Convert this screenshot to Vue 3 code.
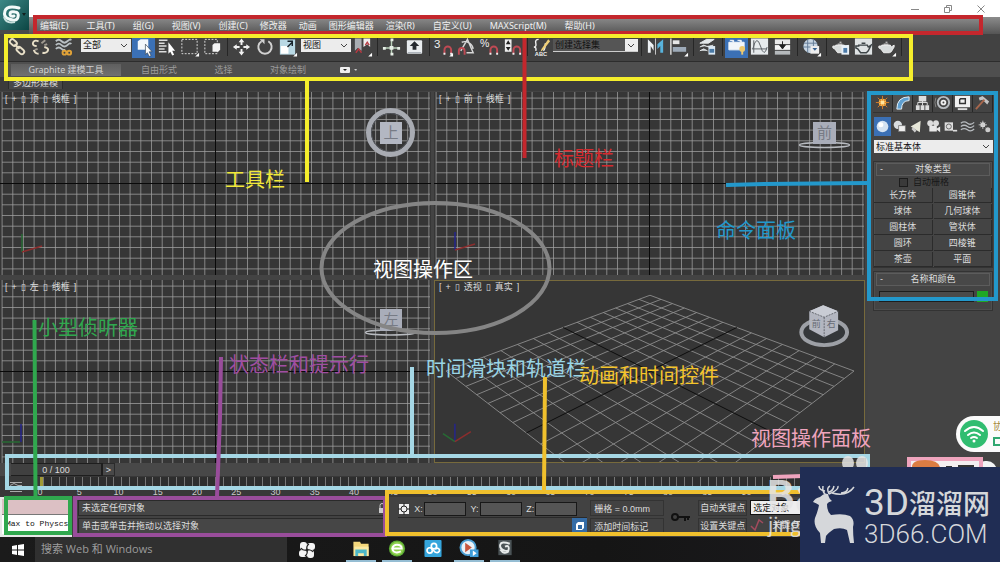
<script setup>
const menus = [
  { t: '编辑(E)', k: true }, { t: '工具(T)', k: true }, { t: '组(G)', k: true },
  { t: '视图(V)', k: true }, { t: '创建(C)', k: false }, { t: '修改器', k: false },
  { t: '动画', k: false }, { t: '图形编辑器', k: false }, { t: '渲染(R)', k: true },
  { t: '自定义(U)', k: true }, { t: 'MAXScript(M)', k: true }, { t: '帮助(H)', k: false }
]

const magnet = '<path d="M12 17v-4a3.500 3.500 0 0 1 7 0v4" fill="none" stroke="#c04a54" stroke-width="2"/><path d="M11 17h2M18 17h2" stroke="#eee" stroke-width="2"/>'
const teapot = '<path d="M6 8h9l1 2 3-2v2l-3 5-2 1H8l-3-4-2-1V9h3zM8 7h5M10 5h2" fill="#d8dcdc" stroke="#eee"/>'
const corner = '<path d="M21 16v4h-4z" fill="#fff"/>'

const icons = {
  link: '<g fill="none" stroke="#e8dfc8" stroke-width="2"><rect x="3" y="3" width="8" height="5" rx="2.500" transform="rotate(42 7 5)"/><rect x="10" y="11" width="9" height="5" rx="2.500" transform="rotate(42 14 13)"/><path d="M8 7l5 5"/></g>',
  unlink: '<g fill="none" stroke="#e8dfc8" stroke-width="2"><path d="M9 4q-5-2-6 2 0 3 4 3M4 13q1 4 5 4M13 16q5 1 6-3 0-2-4-3"/><path d="M12 6l4-3M15 8l3-1M8 12l-3 1" stroke="#a09a90"/></g>',
  bind: '<g fill="none" stroke="#b9c0c4" stroke-width="2"><path d="M3 4q3-3 6 0t6 0 4-1M3 8q3-3 6 0t6 0 4-1M3 12q3-3 6 0t3 0"/></g><g fill="none" stroke="#e0a238" stroke-width="2"><circle cx="12" cy="16" r="2"/><circle cx="17" cy="16" r="2"/></g>',
  pick: '<path d="M5 4l3-2h8v9l-3 2H5z" fill="#f3f7fb"/><path d="M13 7v11l2-2 2 4 2-1-2-4h3z" fill="#fff" stroke="#345" stroke-width=".7"/>',
  byname: '<path d="M3 3h9M3 6h6M3 9h8M3 12h6M3 15h8" stroke="#ddd" stroke-width="1.500"/><path d="M13 5v12l2-2 2 4 2-1-2-4h3z" fill="#fff"/>',
  rect: '<rect x="3" y="2" width="16" height="15" fill="none" stroke="#ddd" stroke-dasharray="2 1.500"/>' + corner,
  window: '<rect x="3" y="2" width="13" height="15" fill="none" stroke="#ddd" stroke-dasharray="2 1.500"/><path d="M11 8l2-2h6v7l-2 2h-6z" fill="#f4f4f4"/>',
  move: '<path d="M11 4v4M11 12v4M5 10h4M13 10h4" stroke="#f2f2f2" stroke-width="2"/><path d="M11 1l3 4H8zM11 19l3-4H8zM2 10l4-3v6zM20 10l-4-3v6z" fill="#f2f2f2"/>',
  rotate: '<path d="M8 4a7 7 0 1 0 7 0" fill="none" stroke="#d2d2d2" stroke-width="2"/><path d="M6 2h5v5z" fill="#d2d2d2"/>',
  scale: '<rect x="3" y="2" width="16" height="16" fill="#b8d8e4"/><rect x="4" y="9" width="8" height="8" fill="#fff"/><path d="M11 10l5-5M16 9V4h-5" fill="none" stroke="#17232b" stroke-width="1.500"/>' + corner,
  pivot: '<path d="M3 1h7v13l-4-3-3 3z" fill="#a9adb2"/><path d="M12 1h7v9l-3-3-4 3z" fill="#eee"/><path d="M4 16l3-4 3 4M14 8l2-3 2 3" stroke="#b83a42" stroke-width="1.500" fill="none"/>' + corner,
  manip: '<path d="M11 3v15M4 11h14" stroke="#b9d0b9" stroke-width="1.500"/><path d="M9 9h4v4H9zM10 1h3v3h-3zM2 10h3v3H2zM17 10h3v3h-3zM10 16h3v3h-3z" fill="#e7efe7"/>',
  keyb: '<rect x="3" y="3" width="16" height="14" rx="1" fill="#e9edf0"/><path d="M11 4l5 5h-3v4H9V9H6z" fill="#252a30"/><path d="M4 16h14" stroke="#98a0a8"/>',
  snap3: '<text x="1" y="11" font-size="12" font-family="Liberation Sans" fill="#f0f0f0">3</text>' + magnet + corner,
  snapang: '<path d="M5 14L12 2l6 14h-7M6 5a9 9 0 0 1 12 7" fill="none" stroke="#d8d8d8" stroke-width="1.500"/><path d="M3 18v-4a3 3 0 0 1 6 0v4" fill="none" stroke="#c04a54" stroke-width="2"/>',
  snappct: '<text x="1" y="10" font-size="11" font-family="Liberation Sans" fill="#f0f0f0">%</text>' + magnet,
  snapspin: '<rect x="3" y="2" width="7" height="13" fill="#eee"/><path d="M4 7l2.500-4L9 7zM4 10h5l-2.500 4z" fill="#222"/>' + magnet,
  named: '<path d="M8 2q-4 0-3 4t-2 4q3 0 2 4M15 6q0 6-2 8" fill="none" stroke="#eee" stroke-width="1.500"/><path d="M18 2l-7 10-1 3 3-2 7-9z" fill="#f0cf77"/><text x="4" y="19" font-size="6" font-weight="700" font-family="Liberation Sans" fill="#eee">ABC</text>',
  mirror: '<path d="M3 2v14h3V9l3 5V8z" fill="#eef2f5"/><path d="M19 2v14h-3V9l-3 3V7z" fill="#58b3dc"/><path d="M11 1v17" stroke="#ccc"/>',
  align: '<path d="M3 1v17" stroke="#ddd" stroke-width="1.500"/><path d="M5 3h7v4H5z" fill="#e6e6e6"/><path d="M5 10h14v5H5z" fill="#9daab8"/>' + corner,
  layers: '<path d="M3 6l7-4h8l-6 4zM3 10l4-2 5 2 5-2M3 14l4-2 4 2" fill="#e4e8ea" stroke="#e4e8ea"/><rect x="12" y="9" width="7" height="9" fill="#dceaf5"/><path d="M13 12h5v4h-5z" fill="#4a7aa6"/>',
  ribbon: '<path d="M3 5h16v8H3zM4 3h4v2M12 3h4v2" fill="#f2f6fa" stroke="#f2f6fa"/><circle cx="17" cy="12" r="3" fill="#edc86d"/><path d="M17 14v4" stroke="#edc86d" stroke-width="2"/>',
  curve: '<rect x="2" y="1" width="18" height="17" fill="#e6eaec"/><path d="M5 3v13M3 12h16M4 12q4-16 8-3t7 1" fill="none" stroke="#5a6065"/>',
  schematic: '<rect x="3" y="2" width="16" height="5" fill="#e9e9e9"/><rect x="3" y="8" width="16" height="5" fill="#f4f4f4"/><rect x="3" y="14" width="16" height="4" fill="#b5b9bc"/><path d="M11 4v5M8 8l3 4 3-4z" fill="#222" stroke="#222"/>',
  material: '<circle cx="10" cy="9" r="7.500" fill="#c7d5e2"/><path d="M3 6h14M2 10h16M7 2v14M13 2v14" stroke="#647c96"/><rect x="10" y="9" width="9" height="8" fill="#eee"/><path d="M12 11h5l-2.500 3z" fill="#345f8f"/>' + corner,
  rsetup: teapot + '<rect x="12" y="8" width="8" height="10" fill="#e9f1f8"/><path d="M14 11h4v5h-4z" fill="#4c7ba9"/>',
  rframe: '<rect x="2" y="1" width="18" height="17" fill="#dfe3e4"/><path d="M6 8h9l1 2 3-2-3 6-2 2H8l-3-4-2-1V9h3zM9 6h4" fill="none" stroke="#3d4447" stroke-width="1.500"/>',
  render: teapot + corner
}

const groups = {
  a: ['link', 'unlink', 'bind'],
  b: ['pick', 'byname', 'rect', 'window'],
  c: ['move', 'rotate', 'scale'],
  e: [['manip', 'keyb'], ['snap3', 'snapang', 'snappct', 'snapspin'], ['named']],
  f: [['mirror', 'align'], ['layers'], ['ribbon', 'curve', 'schematic'], ['material'], ['rsetup', 'rframe', 'render']]
}

const panelTabs = [
  '<circle cx="9" cy="9" r="4" fill="#f7b54a"/><path d="M9 2v14M2 9h14M4 4l10 10M14 4L4 14" stroke="#d67c28"/><circle cx="9" cy="9" r="2" fill="#ffe5a0"/>',
  '<path d="M3 16Q3 3 16 3v4Q8 7 8 16z" fill="#5f9fd0" stroke="#e8f1f8"/>',
  '<path d="M5 2h8v6H5zM2 12h4v5H2zM7 12h4v5H7zM12 12h4v5h-4z" fill="#ddd"/><path d="M9 7v5M4 12V9h10v3" fill="none" stroke="#ddd"/>',
  '<circle cx="10" cy="9" r="6" fill="none" stroke="#b8bcc0" stroke-width="2"/><circle cx="10" cy="9" r="3" fill="#eee"/><circle cx="10" cy="9" r="1" fill="#444"/><path d="M2 4q-2 5 0 10" stroke="#888" fill="none"/>',
  '<rect x="1" y="2" width="16" height="12" fill="#f0f0f0"/><path d="M7 5h5v5H6V6z" fill="none" stroke="#333" stroke-width="1.500"/><path d="M4 16h10" stroke="#ddd" stroke-width="2"/>',
  '<path d="M5 4l4-2 7 6-2 3-5-5-3 1z" fill="#c4c4c4"/><path d="M11 6L2 16" stroke="#a8674d" stroke-width="2"/>'
]
const kinds = [
  '<circle cx="9" cy="9" r="7" fill="#d4e2f1"/><circle cx="7" cy="7" r="3" fill="#fff"/>',
  '<circle cx="7" cy="7" r="5" fill="#d9dde0"/><rect x="8" y="8" width="8" height="7" fill="#eee" stroke="#777"/>',
  '<path d="M2 9l12-7-1 14z" fill="#e6e6d8"/><path d="M4 11l4 4" stroke="#ccc" stroke-width="3"/>',
  '<circle cx="5" cy="5" r="3.500" fill="#ddd"/><circle cx="12" cy="5" r="3.500" fill="#ddd"/><path d="M4 8h9v7H4zM12 12l5-3v7z" fill="#e8e8e8"/>',
  '<rect x="2" y="4" width="10" height="10" fill="#ddd"/><circle cx="7" cy="9" r="3" fill="none" stroke="#555"/><path d="M12 14h5" stroke="#ddd" stroke-width="2"/>',
  '<path d="M1 5q4-3 8 0t8-1M1 9q4-3 8 0t8-1M1 13q4-3 8 0t8-1" fill="none" stroke="#b8bcc0" stroke-width="1.500"/>',
  '<circle cx="7" cy="7" r="3" fill="#ddd"/><circle cx="13" cy="13" r="3" fill="#ccc"/><path d="M7 2v10M2 7h10M4 4l6 6M10 4l-6 6" stroke="#ccc"/>'
]
const primitives = ['长方体', '圆锥体', '球体', '几何球体', '圆柱体', '管状体', '圆环', '四棱锥', '茶壶', '平面']

const views = [
  { id: 'top', name: '顶', mode: '线框', axes: [['#276b34', 'M22 160V142'], ['#8c2d2d', 'M22 160l20-6']] },
  { id: 'front', name: '前', mode: '线框', axes: [['#25258c', 'M21 158V140'], ['#8c2d2d', 'M21 158l20-6']] },
  { id: 'left', name: '左', mode: '线框', axes: [['#25258c', 'M21 162V144'], ['#276b34', 'M20 162H2']] },
  { id: 'persp', name: '透视', mode: '真实', axes: [['#25258c', 'M20 162V144'], ['#276b34', 'M20 162l-12-8'], ['#8c2d2d', 'M20 162l16-10']] }
]
const STEP = 10.67
const offsets = Array.from({ length: 41 }, (_, i) => i - 20).filter(i => i !== 0)
const vLines = offsets.map(i => `M${(215.5 + i * STEP).toFixed(1)} 0V183`).join('')
const hLines = offsets.filter(i => Math.abs(i) < 9).map(i => `M2 ${(91.5 + i * STEP).toFixed(1)}H430`).join('')

function project(s, t) {
  const d = (s + t) / 2
  const e = (s - t) / 2
  const w = 1 - 0.35 * d
  return `${(216 + (205 * e) / w).toFixed(1)} ${(91 + (102.7 * d) / w).toFixed(1)}`
}
const N = 7
const floor = Array.from({ length: 2 * N + 1 }, (_, i) => i - N).filter(i => i !== 0)
  .map(i => `M${project(i / N, -1)}L${project(i / N, 1)}M${project(-1, i / N)}L${project(1, i / N)}`).join('')
const floorAxes = `M${project(0, -1)}L${project(0, 1)}M${project(-1, 0)}L${project(1, 0)}`

const frames = Array.from({ length: 21 }, (_, i) => i * 5)

const notes = [
  { t: '工具栏', x: 225, y: 187, c: '#f2e93a' },
  { t: '标题栏', x: 554, y: 166, c: '#d42a2e' },
  { t: '命令面板', x: 716, y: 238, c: '#2398cb' },
  { t: '视图操作区', x: 373, y: 277, c: '#ffffff' },
  { t: '小型侦听器', x: 38, y: 335, c: '#30a84e' },
  { t: '状态栏和提示行', x: 229, y: 372, c: '#a04ea2' },
  { t: '时间滑块和轨道栏', x: 426, y: 376, c: '#99d5e6' },
  { t: '动画和时间控件', x: 579, y: 383, c: '#f5c52c' },
  { t: '视图操作面板', x: 751, y: 446, c: '#efa4bd' }
]

const apps = [
  { n: '文件资源管理器', on: true, s: '<path d="M2 3h7l1 2h8v13H2z" fill="#f4d77c"/><path d="M3 8h15v10H3z" fill="#fbe9a4"/><path d="M4 18v-7h12v7h-3v-3H7v3z" fill="#4db8c8"/>' },
  { n: '浏览器', on: true, s: '<circle cx="10" cy="10" r="8.500" fill="#5fae36"/><circle cx="10" cy="10" r="7" fill="#8fd14f"/><path d="M5 10h10q0-4-5-4-4 0-5 4 1 5 6 4l3-1" fill="none" stroke="#fff" stroke-width="2"/>' },
  { n: '云盘', on: false, s: '<rect x="1" y="1" width="18" height="18" rx="1" fill="#35a5dc"/><g fill="none" stroke="#fff" stroke-width="1.800"><circle cx="11" cy="7.500" r="2.800"/><circle cx="6.500" cy="12" r="2.800"/><path d="M8.500 10l4 4q3 1 4-1t-1-3q-2-1-3 1"/></g>' },
  { n: '播放器', on: true, s: '<circle cx="9" cy="9" r="8" fill="#e9f1f8" stroke="#4c9fd4" stroke-width="2"/><path d="M6 4l7 5-7 5z" fill="#c8553d"/><rect x="11" y="11" width="9" height="8" fill="#3f9edb"/><path d="M14 12l4 3-4 3z" fill="#fff"/>' },
  { n: '3ds Max', on: true, s: '<rect x="3" y="1" width="14" height="16" fill="#4b5356"/><path d="M15 5q-9-3-10 1t4 6 5-2-4-2M5 11q4 6 9 2" fill="none" stroke="#e6eaea" stroke-width="2"/>' }
]
</script>

<template>
  <div class="app">
    <header class="top">
      <button class="logo" aria-label="应用程序菜单">
        <svg viewBox="0 0 29 30">
          <path d="M19 8Q7 5 5 11t4 8q8 3 9-2t-3-5q-5-1-5 2t4 2" fill="none" stroke="#f3faf9" stroke-width="3" stroke-linecap="round" />
          <path d="M4 17q2 7 11 5" fill="none" stroke="#c8e0dd" stroke-width="2" />
          <path d="M22 13h4l-2 3z" fill="#12211f" />
        </svg>
      </button>
      <div class="title">
        <button aria-label="最小化"><svg viewBox="0 0 10 10"><path d="M1 5.500h8" /></svg></button>
        <button aria-label="还原"><svg viewBox="0 0 10 10"><path d="M1.500 3.500h5v5h-5zM3.500 3V1.500h5v5H7" /></svg></button>
        <button aria-label="关闭"><svg viewBox="0 0 10 10"><path d="M1.500 1.500l7 7M8.500 1.500l-7 7" /></svg></button>
      </div>
      <nav class="menu">
        <button v-for="m in menus" :key="m.t" :class="{ key: m.k }">{{ m.t }}</button>
      </nav>
    </header>

    <div class="toolbar">
      <button v-for="i in groups.a" :key="i" class="tool" :aria-label="i"><svg viewBox="0 0 22 20" v-html="icons[i]" /></button>
      <label class="combo filter">
        <select aria-label="选择过滤器"><option>全部</option></select>
        <svg viewBox="0 0 8 6"><path d="M1 1l3 3 3-3" /></svg>
      </label>
      <button v-for="i in groups.b" :key="i" class="tool" :class="{ on: i === 'pick' }" :aria-label="i"><svg viewBox="0 0 22 20" v-html="icons[i]" /></button>
      <i class="sep" />
      <button v-for="i in groups.c" :key="i" class="tool" :aria-label="i"><svg viewBox="0 0 22 20" v-html="icons[i]" /></button>
      <label class="combo coord">
        <select aria-label="参考坐标系"><option>视图</option></select>
        <svg viewBox="0 0 8 6"><path d="M1 1l3 3 3-3" /></svg>
      </label>
      <button class="tool" aria-label="pivot"><svg viewBox="0 0 22 20" v-html="icons.pivot" /></button>
      <template v-for="(g, n) in groups.e" :key="n">
        <i class="sep" />
        <button v-for="i in g" :key="i" class="tool" :aria-label="i"><svg viewBox="0 0 22 20" v-html="icons[i]" /></button>
      </template>
      <label class="combo sets">
        <select aria-label="命名选择集"><option>创建选择集</option></select>
        <svg viewBox="0 0 8 6"><path d="M1 1l3 3 3-3" /></svg>
      </label>
      <template v-for="(g, n) in groups.f" :key="n">
        <i class="sep" />
        <button v-for="i in g" :key="i" class="tool" :class="{ on: i === 'ribbon' }" :aria-label="i"><svg viewBox="0 0 22 20" v-html="icons[i]" /></button>
      </template>
      <i class="sep" />
    </div>

    <div class="ribbon">
      <button class="tab active">Graphite 建模工具</button>
      <button class="tab free">自由形式</button>
      <button class="tab sel">选择</button>
      <button class="tab paint">对象绘制</button>
      <button class="mini" aria-label="最小化功能区"><svg viewBox="0 0 20 8"><rect x="0" y="1" width="10" height="6" rx="1" fill="#eee" /><path d="M3 3h4l-2 2z" fill="#222" /><path d="M14 3h3l-1 2z" fill="#ccc" /></svg></button>
    </div>
    <div class="subribbon"><span>多边形建模</span></div>

    <main class="main">
      <section class="work">
        <div class="views">
          <div v-for="v in views" :key="v.id" class="view" :class="v.id">
            <svg class="canvas" viewBox="0 0 431 183" preserveAspectRatio="xMidYMid slice">
              <template v-if="v.id !== 'persp'">
                <path :d="vLines" stroke="#a2a2a2" stroke-opacity=".75" />
                <path :d="hLines" stroke="#a2a2a2" stroke-opacity=".75" />
                <path d="M215.500 0V183M0 91.500H431" stroke="#090909" />
              </template>
              <template v-else>
                <path :d="floor" stroke="#8d8d8d" stroke-width=".9" fill="none" />
                <path :d="floorAxes" stroke="#0c0c0c" fill="none" />
              </template>
              <path v-for="a in v.axes" :key="a[0]" :d="a[1]" :stroke="a[0]" stroke-width="1.500" />
              <g v-if="v.id === 'top'">
                <circle cx="390.500" cy="40.500" r="22" fill="none" stroke="#a8abb2" stroke-width="5" />
                <circle cx="390.500" cy="40.500" r="19" fill="none" stroke="#55585e" />
                <rect x="380" y="30" width="22" height="22" fill="#b3b7c2" />
                <text x="391" y="46" text-anchor="middle" class="face">上</text>
              </g>
              <g v-if="v.id === 'front'">
                <ellipse cx="390.500" cy="53" rx="25" ry="2.500" fill="none" stroke="#b8bbc0" stroke-width="1.500" />
                <rect x="379" y="30" width="23" height="22" fill="#a9adb9" />
                <text x="390.500" y="46" text-anchor="middle" class="face">前</text>
              </g>
              <g v-if="v.id === 'left'">
                <ellipse cx="390.500" cy="52.500" rx="25" ry="2.500" fill="none" stroke="#b8bbc0" stroke-width="1.500" />
                <rect x="380" y="29" width="22" height="22" fill="#a9adb9" />
                <text x="391" y="45" text-anchor="middle" class="face">左</text>
              </g>
              <g v-if="v.id === 'persp'">
                <ellipse cx="391" cy="52" rx="23" ry="13" fill="#34373a" stroke="#9da0a6" stroke-width="4" />
                <path d="M376 31l14-6 15 6v19l-14 7-15-8z" fill="#b3b6c0" />
                <path d="M376 31l15 6 14-6-15-6z" fill="#c9ccd4" />
                <path d="M391 37v20M376 31l15 6 14-6" stroke="#65686f" stroke-dasharray="2 1" fill="none" />
                <text x="383" y="47" text-anchor="middle" class="side">前</text>
                <text x="398" y="47" text-anchor="middle" class="side">右</text>
              </g>
            </svg>
            <span class="vname"><i>[</i><i>+</i><i>▯</i><i>{{ v.name }}</i><i>▯</i><i>{{ v.mode }}</i><i>]</i></span>
          </div>
        </div>
        <div class="slider">
          <button class="thumb">0 / 100</button>
          <button class="next" aria-label="下一帧">&gt;</button>
        </div>
        <div class="track">
          <svg class="curveicon" viewBox="0 0 14 16"><path d="M1 5.500h12M1 11.500h12M1 14.500h12M1 8.500l4-2 4 2h4" stroke="#aaa" fill="none" /></svg>
          <div class="ruler">
            <div class="ticks" />
            <span v-for="f in frames" :key="f" :style="{ left: f + '%' }">{{ f }}</span>
          </div>
        </div>
      </section>

      <aside class="panel">
        <div class="ptabs">
          <button v-for="(p, n) in panelTabs" :key="n" :class="{ on: n === 1 }" :aria-label="'面板 ' + (n + 1)"><svg viewBox="0 0 18 18" v-html="p" /></button>
        </div>
        <div class="kinds">
          <button v-for="(p, n) in kinds" :key="n" :class="{ on: n === 0 }" :aria-label="'类别 ' + (n + 1)"><svg viewBox="0 0 18 18" v-html="p" /></button>
        </div>
        <label class="combo prim">
          <select aria-label="对象子类别"><option>标准基本体</option></select>
          <svg viewBox="0 0 8 6"><path d="M1 1l3 3 3-3" /></svg>
        </label>
        <section class="roll">
          <h2><i>-</i>对象类型</h2>
          <label class="auto"><input type="checkbox">自动栅格</label>
          <div class="prims"><button v-for="p in primitives" :key="p">{{ p }}</button></div>
        </section>
        <section class="roll">
          <h2><i>-</i>名称和颜色</h2>
          <div class="named"><input type="text" aria-label="名称"><button aria-label="颜色" /></div>
        </section>
      </aside>
    </main>

    <footer class="status">
      <div class="listener"><div class="macro" /><div class="script">Max to Physcs</div></div>
      <div class="prompt">
        <div class="line">未选定任何对象
          <svg viewBox="0 0 10 12"><path d="M3 6V3.500a2 2 0 0 1 4 0V6" fill="none" stroke="#ccc" /><rect x="2" y="6" width="6" height="5" fill="#ccc" /></svg>
        </div>
        <div class="line">单击或单击并拖动以选择对象</div>
      </div>
      <div class="coords">
        <div class="xyz">
          <svg class="abs" viewBox="0 0 12 12"><rect x="1" y="1" width="10" height="10" fill="#eee" /><circle cx="6" cy="6" r="3" fill="none" stroke="#222" /><path d="M6 0v3M6 9v3M0 6h3M9 6h3" stroke="#222" /></svg>
          <label v-for="a in ['X', 'Y', 'Z']" :key="a">{{ a }}:<input type="text"></label>
        </div>
        <div class="tagrow"><button aria-label="自适应降级"><svg viewBox="0 0 12 12"><path d="M2 4l2-2h6v6l-2 2H2z" fill="#fff" /><path d="M4 5h4v4H4z" fill="#356ca6" /></svg></button></div>
      </div>
      <div class="cells grid"><span>栅格 = 0.0mm</span><span>添加时间标记</span></div>
      <button class="setkey" aria-label="设置关键点"><svg viewBox="0 0 20 10"><circle cx="4" cy="5" r="3" fill="none" stroke="#111" stroke-width="2" /><path d="M7 5h12M14 5v4M17 5v3" stroke="#111" stroke-width="2" /></svg></button>
      <div class="cells keys"><button>自动关键点</button><button>设置关键点</button></div>
      <div class="keysel">
        <select aria-label="关键点选择集"><option>选定对象</option></select>
        <div class="filterrow"><svg viewBox="0 0 16 14"><path d="M1 8l4 4 4-10 4 3" fill="none" stroke="#a34b5d" stroke-width="1.500" /></svg><button>关键点过滤器</button></div>
      </div>
    </footer>

    <div class="taskbar">
      <button class="start" aria-label="开始"><svg viewBox="0 0 14 14"><path d="M1 3l5-1v4.500H1zM7 2l6-1v5.500H7zM1 7.500h5V12l-5-1zM7 7.500h6V13l-6-1z" fill="#fff" /></svg></button>
      <input class="search" type="text" placeholder="搜索 Web 和 Windows" aria-label="搜索">
      <button class="flower" aria-label="助手">
        <svg viewBox="0 0 18 18">
          <g fill="#f4f4f4"><rect x="2" y="1" width="7" height="8" rx="3" /><rect x="9" y="2" width="8" height="7" rx="3" /><rect x="1" y="9" width="8" height="7" rx="3" /><rect x="9" y="9" width="7" height="8" rx="3" /></g>
          <path d="M9 9q-4 1-6-2M9 9q-1-4 2-6M9 9q4-1 6 2M9 9q1 4-2 6" fill="none" stroke="#222" stroke-width="1.200" />
        </svg>
      </button>
      <button v-for="a in apps" :key="a.n" class="task" :class="{ on: a.on }" :aria-label="a.n"><svg viewBox="0 0 20 20" v-html="a.s" /></button>
    </div>

    <div class="widget">
      <svg viewBox="0 0 44 38">
        <rect x="0" y="1" width="60" height="36" rx="18" fill="#fbfbfb" />
        <circle cx="18" cy="19" r="14" fill="#30bd70" />
        <g fill="none" stroke="#fff" stroke-width="2" stroke-linecap="round"><path d="M9 16q9-8 18 0M12 20q6-5 12 0M15 23q3-2 6 0" /></g>
        <circle cx="18" cy="26" r="1.500" fill="#fff" />
        <text x="37" y="15" font-size="10" fill="#a5873b">协</text>
        <rect x="38" y="23" width="7" height="7" fill="none" stroke="#30a770" stroke-width="2" />
      </svg>
    </div>

    <svg class="marks" viewBox="0 0 1000 562" preserveAspectRatio="none">
      <g fill="none" stroke-width="4">
        <rect x="35" y="17" width="946" height="16" stroke="#c4272d" />
        <rect x="6" y="36" width="905" height="43" stroke="#f5ee2c" />
        <path d="M524.500 38V158" stroke="#c4272d" />
        <path d="M307 81V182" stroke="#f5ee2c" />
        <path d="M726 185l38-1 104-1" stroke="#2398cb" />
        <rect x="869" y="93" width="127" height="206" stroke="#2398cb" />
        <ellipse cx="435.500" cy="268" rx="114" ry="65" stroke="#858585" />
        <path d="M412 367V455" stroke="#a5d7e5" />
        <path d="M870 488H7V456H868V470" stroke="#a5d7e5" />
        <path d="M221 357l-1 60-3 80" stroke="#994d9b" />
        <rect x="75" y="498" width="310" height="37" stroke="#994d9b" />
        <path d="M34.500 320l1 177" stroke="#30a84e" />
        <rect x="6" y="498" width="64" height="35" stroke="#30a84e" />
        <path d="M545 377l-1 113" stroke="#f0c02d" />
        <path d="M830 492H387V534H830" stroke="#f0c02d" />
        <path d="M773 477l30-1" stroke="#efa4bd" />
      </g>
      <g>
        <rect x="975" y="461" width="22" height="20" rx="10" fill="#f4f4f4" />
        <rect x="909" y="459" width="72" height="24" fill="#f3eef0" stroke="#efa4bd" stroke-width="4" />
        <path d="M912 467q0-7 13-7t15 7z" fill="#dc7d43" />
        <path d="M946 467h6M958 466h16" stroke="#333" stroke-width="2" />
      </g>
      <g fill="#e6e6e6" opacity=".85">
        <ellipse cx="848" cy="463" rx="6" ry="7" /><ellipse cx="862" cy="463" rx="6" ry="7" />
        <text x="766" y="511" font-size="42" font-weight="700">Bai</text>
        <text x="768" y="532" font-size="19">jingyan</text>
      </g>
      <text v-for="n in notes" :key="n.t" :x="n.x" :y="n.y" :fill="n.c" font-size="20">{{ n.t }}</text>
    </svg>

    <div class="brand">
      <svg viewBox="0 0 44 60">
        <path d="M8 12Q12 8 16 9Q17 14 20 16Q16 17 15 19Q15 27 19 30Q31 28 38 31Q43 35 41 42Q41 50 42 58H38L35 45Q30 42 22 44Q16 48 14 51L13 58H9L8 48Q1 41 3 33Q6 26 7 20Q4 18 1 17Q3 13 8 12Z" fill="#d5d7da" />
        <path d="M14 10Q10 7 11 1M13 6Q7 5 7 1M17 9Q14 3 18 1M17 7Q21 6 22 1M17 9Q27 5 26 1M20 8Q35 12 42 2M29 8Q35 8 36 3" fill="none" stroke="#d5d7da" stroke-width="1.500" />
      </svg>
      <div class="words">
        <div class="cn"><b>3D</b>溜溜网</div>
        <div class="en">3D66.COM</div>
      </div>
    </div>
  </div>
</template>

<style>
body { background: #444; }
</style>

<style scoped>
* { box-sizing: border-box; }
.app {
  position: relative; display: flex; flex-direction: column; min-height: 100vh; overflow: hidden;
  background: #444; color: #ddd; font: 9px/12px "Liberation Sans", "Noto Sans CJK SC", sans-serif;
}
button, input, select { font: inherit; color: inherit; border: 0; margin: 0; padding: 0; background: none; border-radius: 0; min-width: 0; }
button { white-space: nowrap; }
svg { display: block; }

.top { display: grid; grid-template-columns: 29px 1fr; grid-template-rows: 17px 17px; background: #4a4a4a; }
.logo { grid-row: 1 / 3; height: 30px; background: linear-gradient(135deg, #3d8886, #0c4644); }
.title { display: flex; justify-content: flex-end; gap: 23px; padding-right: 14px; background: #fff; }
.title svg { width: 10px; height: 10px; fill: none; stroke: #888; }
.menu { display: flex; align-items: center; gap: 12px; padding: 0 11px; background: linear-gradient(#8c8c8c, #555); color: #f0f0f0; font-family: "Noto Sans", "Noto Sans CJK SC", sans-serif; }
.menu .key { margin-right: 6px; }

.toolbar { display: flex; align-items: center; height: 28px; padding: 0 6px 2px; background: #424242; border-bottom: 1px solid #2d2d2d; }
.tool { width: 23px; height: 22px; flex: none; }
.tool svg { width: 21px; height: 20px; margin: auto; }
.tool.on { background: #3b70b5; }
.sep { width: 6px; height: 18px; flex: none; background: linear-gradient(#262626, #262626) center / 1px 100% no-repeat; }
.combo { position: relative; display: block; flex: none; height: 13px; background: #ececec; color: #111; }
.combo select { appearance: none; width: 100%; height: 100%; padding-left: 2px; line-height: 12px; display: block; }
.combo svg { position: absolute; right: 3px; top: 4px; width: 8px; height: 6px; fill: none; stroke: #444; }
.toolbar .combo { margin-bottom: 3px; }
.filter { width: 50px; margin: 0 1px 0 6px; }
.coord { width: 50px; margin-left: 2px; }
.sets { width: 85px; background: linear-gradient(90deg, #555 72px, #eee 72px); border-bottom: 1px solid #ccc; }

.ribbon { display: flex; align-items: center; height: 15px; padding-left: 11px; background: #4f4f4f; color: #9b9b9b; }
.tab { width: 58px; }
.tab.active { width: 110px; height: 12px; background: linear-gradient(#5f5f5f, #717171); color: #d0d0d0; font-family: "Noto Sans", "Noto Sans CJK SC", sans-serif; }
.free { width: 76px; }
.sel { width: 53px; }
.paint { width: 76px; }
.mini { margin-left: 14px; }
.mini svg { width: 20px; height: 8px; }
.subribbon { height: 14px; padding-left: 8px; background: #3b3b3b; }
.subribbon span { display: inline-block; height: 12px; padding: 0 4px; background: #484848; border: solid #2c2c2c; border-width: 0 1px; }

.main { flex: 1; display: flex; min-height: 0; }
.work { flex: 1; display: flex; flex-direction: column; min-width: 0; }
.views { flex: 1; display: grid; grid-template: 1fr 1fr / 1fr 1fr; gap: 5px 3px; padding: 1px 3px 0 0; background: #434343; }
.view { position: relative; min-height: 120px; overflow: hidden; background: #363636; }
.persp { box-shadow: inset 0 0 0 1px #776a3c; }
.canvas { position: absolute; inset: 0; width: 100%; height: 100%; }
.persp .canvas { inset: 1px; width: calc(100% - 2px); height: calc(100% - 2px); }
.face { font-size: 15px; fill: #777b85; }
.side { font-size: 9px; fill: #666a74; }
.vname { position: absolute; left: 5px; top: 1px; display: flex; gap: 4px; color: #dcdcdc; }
.vname i { font-style: normal; }
.slider { display: flex; height: 13px; padding-left: 11px; background: #484848; }
.thumb { width: 92px; background: #404040; border: solid #1e1e1e; border-width: 1px 2px 1px 0; }
.next { width: 12px; border: solid #2b2b2b; border-width: 1px 1px 1px 0; }
.track { display: flex; height: 21px; background: #383838; }
.curveicon { width: 14px; height: 16px; margin: 1px 9px 0; flex: none; }
.ruler { position: relative; flex: 1; margin: 1px 43px 0 8px; }
.ticks { height: 9px; border-left: 3px solid #a19a36; background: repeating-linear-gradient(90deg, #777 0 1px, #2e2e2e 1px 1%); }
.ruler span { position: absolute; top: 9px; width: 20px; margin-left: -10px; text-align: center; color: #c9c9c9; }

.panel { width: 132px; padding: 2px 7px 0 5px; background: #444; }
.ptabs { display: flex; height: 20px; border-bottom: 1px solid #333; }
.ptabs button { flex: 1; border-right: 1px solid #272727; }
.ptabs svg { width: 17px; height: 17px; margin: auto; }
.ptabs .on { background: #505050; }
.kinds { display: flex; margin: 4px 0 4px 1px; height: 19px; }
.kinds button { flex: 1; }
.kinds svg { width: 15px; height: 17px; margin: auto; }
.kinds .on { background: #3b70b5; }
.prim { height: 13px; margin: 0 0 8px 1px; }
.roll { margin-bottom: 3px; border: 1px solid #333; box-shadow: inset 0 0 0 1px #4e4e4e; }
.roll h2 { position: relative; margin: 1px 2px 0; font-size: 9px; line-height: 11px; font-weight: 400; text-align: center; border: 1px solid #5c5c5c; background: #484848; }
.roll h2 i { position: absolute; left: 3px; font-style: normal; }
.auto { display: flex; align-items: center; justify-content: center; gap: 5px; height: 12px; margin-right: 18px; color: #181818; }
.auto input { appearance: none; width: 9px; height: 9px; border: 1px solid #1c1c1c; background: #3a3a3a; }
.prims { display: grid; grid-template-columns: 1fr 1fr; column-gap: 1px; }
.prims button { height: 15px; margin-bottom: 1px; line-height: 14px; border: solid #2b2b2b; border-width: 0 1px 1px 0; }
.prims button:nth-child(n+9) { margin-bottom: 0; }
.named { display: flex; gap: 3px; padding: 5px 4px 8px 5px; }
.named input { flex: 1; height: 11px; background: #4a4a4a; border: 1px solid #1d1d1d; }
.named button { width: 11px; height: 11px; background: #1fa824; }

.status { display: flex; height: 40px; background: #424242; }
.listener { width: 72px; padding: 2px 2px 3px; background: #e8e8e8; }
.macro { height: 16px; background: #dcc0c4; border-bottom: 1px solid #777; }
.script { height: 19px; padding-left: 4px; white-space: nowrap; color: #111; background: #fff; font: 8px/18px "Liberation Mono", monospace; }
.prompt { flex: 31; padding: 3px 10px 3px 6px; display: grid; gap: 2px; }
.line { display: flex; align-items: center; justify-content: space-between; padding-left: 3px; border: 1px solid #2a2a2a; background: #464646; }
.line svg { width: 10px; height: 12px; }
.coords { flex: 19; display: flex; flex-direction: column; padding: 3px 3px 3px 0; }
.xyz { display: flex; align-items: center; justify-content: space-between; height: 17px; padding-right: 10px; }
.abs { width: 12px; height: 12px; }
.xyz label { display: flex; align-items: center; gap: 1px; }
.xyz input { width: 42px; height: 14px; background: #555; border: 1px solid #181818; }
.tagrow { display: flex; justify-content: flex-end; height: 17px; border-top: 1px solid #2a2a2a; }
.tagrow button { width: 15px; background: #356ca6; }
.tagrow svg { width: 12px; height: 12px; margin: auto; }
.cells { display: grid; grid-template-rows: 1fr 1fr; gap: 2px; padding: 3px 0; }
.cells > * { border: 1px solid #333; padding: 2px 0 0 3px; text-align: left; white-space: nowrap; }
.grid { width: 74px; }
.setkey { width: 34px; }
.setkey svg { width: 20px; height: 10px; margin: auto; }
.keys { width: 49px; }
.cells.keys > * { padding: 0 0 0 1px; }
.keysel { flex: 25; padding: 3px 0 0 3px; }
.keysel select { appearance: none; display: block; width: 60px; height: 15px; padding-left: 2px; background: #eee; color: #111; border: 1px solid #111; }
.filterrow { display: flex; align-items: center; gap: 6px; height: 19px; }
.filterrow svg { width: 16px; height: 14px; }

.taskbar { display: flex; align-items: stretch; height: 25px; background: linear-gradient(90deg, #1b1b1b, #151515 60%, #1e1d22); }
.start { width: 35px; }
.start svg { width: 14px; height: 14px; margin: auto; }
.search { width: 252px; padding: 0 6px 2px; background: #303030; color: #9c9c9c; font: 11px/16px "Open Sans", "Noto Sans CJK SC", sans-serif; }
.search::placeholder { color: #9c9c9c; opacity: 1; }
.flower { width: 40px; }
.flower svg { width: 18px; height: 18px; margin: auto; }
.flower + .task { margin-left: 19px; }
.task { width: 30px; margin-right: 6px; border-bottom: 2px solid transparent; }
.task.on { border-color: #95bdd3; }
.task svg { width: 20px; height: 19px; margin: auto; }

.widget { position: absolute; right: 0; top: 415px; width: 44px; height: 38px; }
.marks { position: absolute; inset: 0; width: 100%; height: 100%; pointer-events: none; font-family: "Noto Sans CJK SC", sans-serif; }
.brand { position: absolute; right: 0; bottom: 0; display: flex; gap: 8px; width: 200px; height: 95px; padding: 18px 0 0 12px; background: #202d54; color: #d5d7da; }
.brand svg { width: 44px; height: 60px; flex: none; }
.cn { display: flex; align-items: center; height: 36px; font: 500 27px/36px "Noto Sans CJK SC", sans-serif; white-space: nowrap; }
.cn b { font: 400 37px/36px Roboto, sans-serif; }
.en { font: 300 26px/26px Roboto, sans-serif; }
</style>
